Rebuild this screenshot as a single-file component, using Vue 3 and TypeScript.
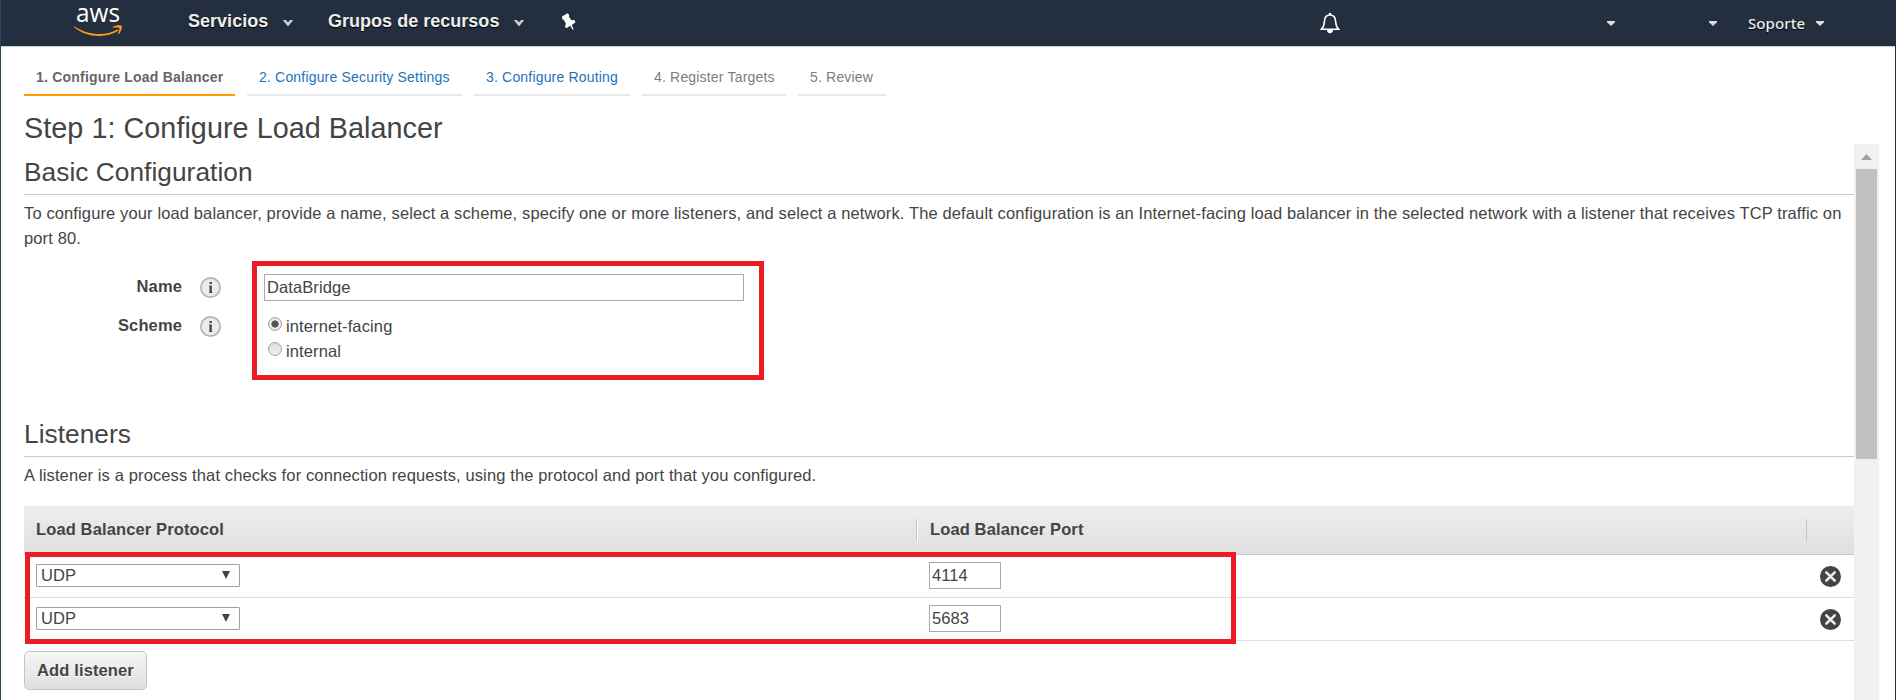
<script setup lang="ts">
import { ref } from 'vue'

interface Step {
  label: string
  state: 'active' | 'link' | 'idle'
}

interface Listener {
  protocol: string
  port: string
}

const steps: Step[] = [
  { label: '1. Configure Load Balancer', state: 'active' },
  { label: '2. Configure Security Settings', state: 'link' },
  { label: '3. Configure Routing', state: 'link' },
  { label: '4. Register Targets', state: 'idle' },
  { label: '5. Review', state: 'idle' },
]

const name = ref('DataBridge')
const scheme = ref('internet-facing')
const schemes = ['internet-facing', 'internal']

const listeners = ref<Listener[]>([
  { protocol: 'UDP', port: '4114' },
  { protocol: 'UDP', port: '5683' },
])

function addListener() {
  listeners.value.push({ protocol: 'UDP', port: '' })
}

function removeListener(index: number) {
  listeners.value.splice(index, 1)
}
</script>

<template>
  <div class="page">
    <header class="nav">
      <svg class="logo" width="50" height="37" viewBox="0 0 50 37">
        <text x="2" y="22" textLength="44" lengthAdjust="spacingAndGlyphs">aws</text>
        <path d="M.6 26.400C14 35.200 31 36.400 43 29.800c1.200-.6 2 .4 1 1.200C32 38.400 12 37.600.2 27.200c-.4-.6 0-1 .4-.8z" />
        <path d="M38.800 26.800c2.600-1.600 7.600-2 8.700-1.100.9 1-.2 5.800-2.600 8.300-.6.5-1 .2-.8-.4.7-1.700 1.800-4.700 1.300-5.500-.6-.8-4-.6-6.200-.4-.8 0-.9-.5-.4-.9z" />
      </svg>
      <span class="menu services">Servicios</span>
      <svg class="chev" width="12" height="8" viewBox="0 0 12 8"><path d="M.8 1h3L6 3.200 8.200 1h3L6 7.400z" /></svg>
      <span class="menu groups">Grupos de recursos</span>
      <svg class="chev" width="12" height="8" viewBox="0 0 12 8"><path d="M.8 1h3L6 3.200 8.200 1h3L6 7.400z" /></svg>
      <svg class="pin" width="16" height="18" viewBox="0 0 16 18">
        <path d="M1 3.600 6.500.3 8.300 2 7.900 3.800l2.600 3.400 3-.2 1 2.300-3.700 2.700 1.900 4.400-1 .3-2.500-4-3.900 2.600-1.300-1.500.9-3-2-3.900L1.300 6z" />
      </svg>
      <svg class="bell" width="20" height="22" viewBox="0 0 20 22">
        <path class="line" d="M1.500 17.200C4.300 14.500 4.200 12 4.500 8.500 4.800 5 6.500 3 10 3s5.200 2 5.500 5.500c.3 3.500.2 6 3 8.700z" />
        <path class="solid" d="M6.700 17.500h6.600c-.2 2.300-1.500 3.700-3.300 3.700s-3.100-1.400-3.300-3.700zM8.800 3V1h2.400V3z" />
      </svg>
      <svg class="caret account" width="8" height="5" viewBox="0 0 8 5"><path d="M0 0h8v1.200L4 5 0 1.200z" /></svg>
      <svg class="caret region" width="8" height="5" viewBox="0 0 8 5"><path d="M0 0h8v1.200L4 5 0 1.200z" /></svg>
      <span class="support">Soporte</span>
      <svg class="caret help" width="8" height="5" viewBox="0 0 8 5"><path d="M0 0h8v1.200L4 5 0 1.200z" /></svg>
    </header>

    <nav class="steps">
      <a v-for="s in steps" :key="s.label" class="step" :class="s.state">{{ s.label }}</a>
    </nav>

    <h1>Step 1: Configure Load Balancer</h1>

    <div class="body">
      <main class="content">
        <h2>Basic Configuration</h2>
        <p class="intro">
          To configure your load balancer, provide a name, select a scheme, specify one or more listeners, and select a network. The default configuration is an Internet-facing load balancer in the selected network with a listener that receives TCP traffic on<br />port 80.
        </p>

        <div class="form">
          <div class="labels">
            <div v-for="l in ['Name', 'Scheme']" :key="l" class="label">
              <span>{{ l }}</span>
              <svg width="21" height="21" viewBox="0 0 21 21">
                <circle cx="10.500" cy="10.500" r="9.600" />
                <path d="M9.500 4.900h2.300v2.200H9.500zM9 8.600h2.800v6.600h.5v.9H9v-.9h.5V9.500H9z" />
              </svg>
            </div>
          </div>
          <div class="fields">
            <input v-model="name" class="text name" type="text" spellcheck="false" />
            <label v-for="s in schemes" :key="s" class="option">
              <input v-model="scheme" type="radio" :value="s" />
              <span>{{ s }}</span>
            </label>
          </div>
        </div>

        <h2 class="second">Listeners</h2>
        <p class="about">A listener is a process that checks for connection requests, using the protocol and port that you configured.</p>

        <div class="table">
          <div class="row head">
            <span>Load Balancer Protocol</span>
            <span class="port-head"><i class="sep"></i>Load Balancer Port</span>
            <span class="last"><i class="sep plain"></i></span>
          </div>
          <div v-for="(l, i) in listeners" :key="i" class="row">
            <div class="select">
              <span>{{ l.protocol }}</span>
              <svg width="8" height="8" viewBox="0 0 8 8"><path d="M0 0h8L4 8z" /></svg>
            </div>
            <input v-model="l.port" class="text port" type="text" />
            <button class="remove" type="button" @click="removeListener(i)">
              <svg width="21" height="21" viewBox="0 0 21 21">
                <circle cx="10.500" cy="10.500" r="10.500" />
                <path d="m6.300 6.300 8.400 8.400m0-8.400-8.400 8.400" />
              </svg>
            </button>
          </div>
          <div class="highlight"></div>
        </div>

        <button class="add" type="button" @click="addListener">Add listener</button>
      </main>

      <div class="scrollbar">
        <svg width="11" height="6" viewBox="0 0 11 6"><path d="M5.500 0 11 6H0z" /></svg>
        <div class="thumb"></div>
      </div>
    </div>
  </div>
</template>

<style>
body {
  margin: 0;
  overflow: hidden;
}
</style>

<style scoped>
.page {
  box-sizing: border-box;
  width: 1896px;
  height: 700px;
  overflow: hidden;
  border-left: 1px solid #23465a;
  border-right: 1px solid #1e2f4d;
  background: #fff;
  color: #444;
  font-family: 'Liberation Sans', Arial, sans-serif;
  font-size: 16.5px;
  letter-spacing: 0.125px;
}

.nav {
  display: flex;
  align-items: flex-start;
  height: 46px;
  background: #232f3e;
  border-bottom: 1px solid #ccc;
}
.nav svg { flex: none; }
.logo { margin-left: 73px; fill: #ff9d1c; overflow: visible; }
.logo text {
  fill: #fff;
  font-family: 'Open Sans', 'Noto Sans', sans-serif;
  font-size: 26px;
  letter-spacing: 0;
}
.menu {
  color: #eee;
  font-size: 18px;
  font-weight: 700;
  letter-spacing: 0.02px;
  line-height: 42px;
  white-space: nowrap;
  text-shadow: 0 1px 1px #000;
}
.services { margin-left: 64px; width: 94px; }
.groups { margin-left: 34px; width: 185px; }
.chev { margin-top: 19px; fill: #ccc; }
.pin { margin: 13px 0 0 36px; fill: #fff; }
.bell { margin: 12px 0 0 743px; }
.bell .line { fill: none; stroke: #fff; stroke-width: 1.6; }
.bell .solid { fill: #fff; }
.caret { margin-top: 21px; fill: #ddd; }
.account { margin-left: 267px; }
.region { margin-left: 94px; }
.support {
  margin-left: 31px;
  width: 68px;
  color: #eee;
  font: 500 15px/46px 'Noto Sans', sans-serif;
  letter-spacing: 0.1px;
  text-shadow: 0 1px 1px #000;
}

.steps {
  display: flex;
  gap: 12px;
  padding: 15px 0 0 23px;
}
.step {
  box-sizing: border-box;
  height: 34px;
  padding: 0 0 0 12px;
  border-bottom: 2px solid #eaeaea;
  font-size: 14px;
  letter-spacing: 0.18px;
  line-height: 31px;
  white-space: nowrap;
}
.step.active { border-color: #f90; color: #666; font-weight: 700; letter-spacing: 0.21px; }
.step.link { color: #1a74ba; }
.step.idle { color: #7d7d7d; }
.step:nth-child(1) { width: 211px; }
.step:nth-child(2) { width: 215px; }
.step:nth-child(3) { width: 156px; }
.step:nth-child(4) { width: 144px; }
.step:nth-child(5) { width: 88px; }

h1, h2 { margin: 0; font-weight: 400; letter-spacing: 0.05px; }
h1 {
  height: 48px;
  padding-left: 23px;
  font-size: 28.75px;
  line-height: 64px;
}

.body { display: flex; height: 556px; padding-left: 23px; }
.content { width: 1830px; }
h2 {
  box-sizing: border-box;
  height: 51px;
  border-bottom: 1px solid #ccc;
  font-size: 26.25px;
  line-height: 56px;
}
p { margin: 0; line-height: 25px; white-space: nowrap; }
.intro { padding-top: 6px; height: 60px; }

.form { display: flex; align-items: flex-start; height: 146px; }
.labels { width: 228px; padding-top: 12px; }
.label {
  display: flex;
  justify-content: flex-end;
  gap: 18px;
  height: 39px;
  margin-right: 31px;
  font-weight: 700;
}
.label span { line-height: 26px; }
.label svg { margin-top: 4px; }
.label circle { fill: #ececec; stroke: #b5b5b5; stroke-width: 1.800; }
.label path { fill: #444; }
.fields {
  box-sizing: border-box;
  width: 512px;
  height: 119px;
  padding: 8px 7px;
  border: 5px solid #ed1c24;
}
.text {
  box-sizing: border-box;
  display: block;
  height: 27px;
  padding: 0 2px;
  border: 1px solid #a9a9a9;
  border-radius: 0;
  outline: none;
  background: #fff;
  color: #444;
  font: 16.5px 'Liberation Sans', Arial, sans-serif;
  letter-spacing: 0.1px;
}
.name { width: 480px; margin-bottom: 13px; }
.option { display: flex; height: 25px; padding-left: 4px; line-height: 25px; }
.option input {
  appearance: none;
  box-sizing: border-box;
  width: 14px;
  height: 14px;
  margin: 3px 4px 0 0;
  border: 1px solid #a2a2a2;
  border-radius: 50%;
  background: linear-gradient(#dcdcdc, #f0f0f0);
}
.option input:checked {
  background: radial-gradient(circle, #555 3.300px, #e9e9e9 3.900px);
}

.second { height: 50px; line-height: 54px; }
.about { padding-top: 6px; height: 43px; }

.table { position: relative; }
.row {
  box-sizing: border-box;
  display: flex;
  height: 43px;
  padding-left: 12px;
  border-bottom: 1px solid #ddd;
}
.head {
  height: 49px;
  border-bottom-color: #c8c8c8;
  background: linear-gradient(#eee, #dfdfdf);
  font-weight: 700;
  line-height: 46px;
}
.head > span { width: 880px; }
.head .port-head { display: flex; width: 890px; }
.sep {
  width: 1px;
  height: 22px;
  margin-top: 13px;
  border-right: 1px solid #fff;
  background: #c4c4c4;
}
.port-head .sep { margin-right: 12px; }
.sep.plain { display: block; border: 0; }
.head .last { width: 40px; }
.select {
  box-sizing: border-box;
  display: flex;
  width: 204px;
  height: 23px;
  margin-top: 9px;
  padding: 0 9px 0 4px;
  justify-content: space-between;
  border: 1px solid #a0a0a0;
  border-radius: 1px;
  line-height: 21px;
}
.select svg { margin-top: 6px; fill: #444; }
.port { width: 72px; margin: 7px 0 0 689px; }
.remove {
  height: 21px;
  margin: 11px 0 0 819px;
  padding: 0;
  border: 0;
  background: none;
}
.remove svg { display: block; }
.remove circle { fill: #444; }
.remove path { stroke: #eee; stroke-width: 2.600; stroke-linecap: round; }
.highlight {
  position: absolute;
  box-sizing: border-box;
  left: 1px;
  top: 46px;
  width: 1211px;
  height: 92px;
  border: 5px solid #ed1c24;
  pointer-events: none;
}
.add {
  box-sizing: border-box;
  display: block;
  width: 123px;
  height: 39px;
  margin-top: 10px;
  padding: 0;
  border: 1px solid #c4c4c4;
  border-radius: 5px;
  background: linear-gradient(#f6f6f6, #dfdfdf);
  color: #444;
  font: 700 16.5px 'Liberation Sans', Arial, sans-serif;
  letter-spacing: 0.125px;
  text-shadow: 0 1px 0 #fff;
}

.scrollbar {
  width: 25px;
  background: #f1f1f1;
}
.scrollbar svg { display: block; margin: 10px auto 9px 7px; fill: #a0a0a0; }
.thumb { width: 21px; height: 290px; margin-left: 2px; background: #c1c1c1; }
</style>
